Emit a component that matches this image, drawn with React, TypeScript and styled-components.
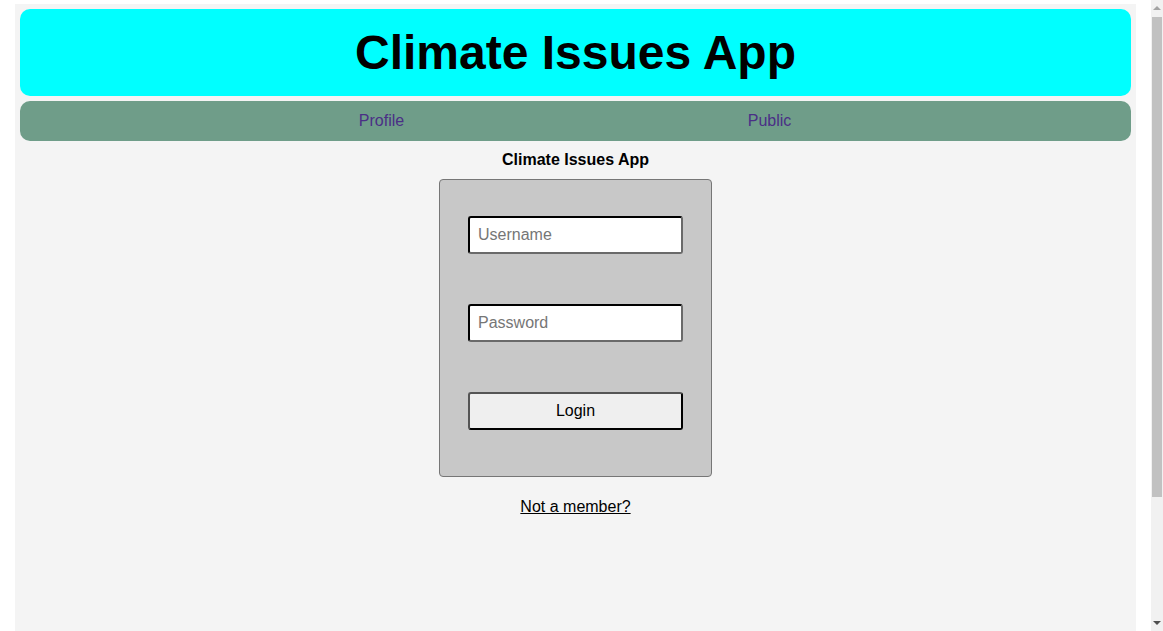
import React from "react";
import styled, { createGlobalStyle } from "styled-components";

const Global = createGlobalStyle`
  html, body { margin: 0; padding: 0; background: #ffffff; }
  body { font-family: "Liberation Sans", Arial, sans-serif; }
`;

const Page = styled.div`
  margin: 4px 27px 0 15px;
  padding: 5px;
  min-height: 650px;
  background: #f4f4f4;
  box-sizing: border-box;
`;

const Header = styled.header`
  background: #00ffff;
  border-radius: 10px;
  padding: 16px;
  text-align: center;
`;

const Title = styled.h1`
  margin: 0;
  font-size: 48px;
  font-weight: bold;
  line-height: 55px;
  color: #000;
`;

const Nav = styled.nav`
  margin-top: 5px;
  height: 40px;
  border-radius: 10px;
  background: #6f9d89;
  display: flex;
  justify-content: center;
  align-items: center;
`;

const NavLink = styled.a`
  width: 388px;
  text-align: center;
  color: #4a2f86;
  font-size: 16px;
  text-decoration: none;
`;

const Main = styled.main`
  display: flex;
  flex-direction: column;
  align-items: center;
  padding-top: 10px;
`;

const SubTitle = styled.h2`
  margin: 0;
  font-size: 16px;
  font-weight: bold;
  line-height: 18px;
`;

const FormBox = styled.form`
  margin-top: 10px;
  width: 273px;
  height: 298px;
  box-sizing: border-box;
  background: #c8c8c8;
  border: 1px solid #767676;
  border-radius: 4px;
  padding: 36px 28px;
  display: flex;
  flex-direction: column;
  gap: 50px;
`;

const Input = styled.input`
  width: 215px;
  height: 38px;
  box-sizing: border-box;
  border: 2px inset #6a6a6a;
  border-top-color: #1a1a1a;
  border-left-color: #1a1a1a;
  border-radius: 3px;
  background: #fff;
  padding: 0 8px;
  font-family: "Liberation Sans", Arial, sans-serif;
  font-size: 16px;
  &::placeholder { color: #767676; }
`;

const Button = styled.button`
  width: 215px;
  height: 38px;
  box-sizing: border-box;
  border: 2px solid #000;
  border-top-color: #555;
  border-left-color: #555;
  border-radius: 3px;
  background: #efefef;
  color: #000;
  font-family: "Liberation Sans", Arial, sans-serif;
  font-size: 16px;
`;

const Member = styled.a`
  margin-top: 21px;
  font-size: 16px;
  color: #000;
  text-decoration: underline;
`;

const ScrollTrack = styled.div`
  position: fixed;
  top: 0;
  right: 0;
  width: 12px;
  height: 100vh;
  background: #f1f1f1;
`;

const ScrollThumb = styled.div`
  position: absolute;
  left: 1px;
  top: 17px;
  width: 10px;
  height: 480px;
  background: #c1c1c1;
`;

const Arrow = styled.div<{ $down?: boolean }>`
  position: absolute;
  left: 2px;
  width: 0;
  height: 0;
  border-left: 4px solid transparent;
  border-right: 4px solid transparent;
  ${(p) =>
    p.$down
      ? `bottom: 6px; border-top: 4px solid #505050;`
      : `top: 6px; border-bottom: 4px solid #a3a3a3;`}
`;

export default function App() {
  return (
    <>
      <Global />
      <Page>
        <Header>
          <Title>Climate Issues App</Title>
        </Header>
        <Nav>
          <NavLink href="#">Profile</NavLink>
          <NavLink href="#">Public</NavLink>
        </Nav>
        <Main>
          <SubTitle>Climate Issues App</SubTitle>
          <FormBox onSubmit={(e) => e.preventDefault()}>
            <Input type="text" placeholder="Username" />
            <Input type="password" placeholder="Password" />
            <Button type="submit">Login</Button>
          </FormBox>
          <Member href="#">Not a member?</Member>
        </Main>
      </Page>
      <ScrollTrack aria-hidden="true">
        <Arrow />
        <ScrollThumb />
        <Arrow $down />
      </ScrollTrack>
    </>
  );
}
